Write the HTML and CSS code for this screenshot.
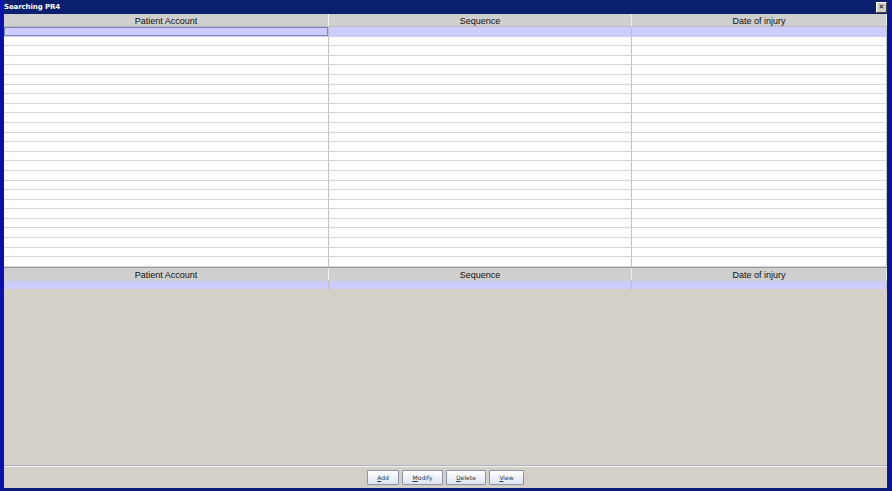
FILE: index.html
```html
<!DOCTYPE html>
<html lang="en">
<head>
  <meta charset="UTF-8">
  <title>Searching PR4</title>
  <link rel="stylesheet" href="styles.css">
</head>
<body>
  <div class="window">
    <div class="titlebar">
      <span class="title">Searching PR4</span>
      <span class="close">&#10005;</span>
    </div>
    <div class="content">
      <div class="table top-table">
        <div class="head-row">
          <div class="head-cell">Patient Account</div>
          <div class="head-cell">Sequence</div>
          <div class="head-cell">Date of injury</div>
        </div>
        <div class="row selected">
          <div class="cell focus"></div>
          <div class="cell"></div>
          <div class="cell"></div>
        </div>
        <div id="rows"></div>
      </div>

      <div class="table bottom-table">
        <div class="head-row">
          <div class="head-cell">Patient Account</div>
          <div class="head-cell">Sequence</div>
          <div class="head-cell">Date of injury</div>
        </div>
        <div class="row selected">
          <div class="cell"></div>
          <div class="cell"></div>
          <div class="cell"></div>
        </div>
      </div>

      <div class="empty"></div>

      <div class="button-bar">
        <button type="button" class="btn btn-add"><u>A</u>dd</button>
        <button type="button" class="btn btn-modify"><u>M</u>odify</button>
        <button type="button" class="btn btn-delete"><u>D</u>elete</button>
        <button type="button" class="btn btn-view"><u>V</u>iew</button>
      </div>
    </div>
  </div>

  <script>
    // empty result rows under the selected one
    const rows = document.getElementById('rows');
    for (let i = 0; i < 24; i++) {
      const row = document.createElement('div');
      row.className = 'row';
      row.innerHTML = '<div class="cell"></div><div class="cell"></div><div class="cell"></div>';
      rows.appendChild(row);
    }
  </script>
</body>
</html>
```

FILE: styles.css
```css
body {
  margin: 0;
  background-color: #0a1a78;
  font-family: Tahoma, "DejaVu Sans", "Liberation Sans", sans-serif;
}
.window {
  width: 892px;
  height: 491px;
  box-sizing: border-box;
  display: flex;
  flex-direction: column;
  background-color: #0b1e7c;
  border-left: 3px solid #0a10b0;
  border-right: 3px solid #0a10b0;
  border-bottom: 3px solid #0a1a78;
}
.titlebar {
  height: 14px;
  flex-shrink: 0;
  display: flex;
  align-items: center;
  justify-content: space-between;
  padding: 0 2px 0 1px;
  background-color: #0a1f6e;
}
.title {
  color: white;
  font-size: 7px;
  font-weight: bold;
  font-family: "DejaVu Sans", sans-serif;
  letter-spacing: -0.1px;
}
.close {
  width: 9px;
  height: 9px;
  background-color: #d4d0c8;
  border: 1px solid #ffffff;
  border-right-color: #404040;
  border-bottom-color: #404040;
  color: #000;
  font-size: 7px;
  line-height: 9px;
  text-align: center;
  font-weight: bold;
}
.content {
  flex: 1;
  display: flex;
  flex-direction: column;
  background-color: #d4d0c8;
  margin-left: 1px;
  margin-right: 2px;
}
.head-row,
.row {
  display: grid;
  grid-template-columns: 325px 303px 1fr;
}
.head-cell {
  height: 12px;
  background-color: #cfcfcf;
  border-right: 1px solid #ececec;
  border-bottom: 1px solid #b8b8b8;
  font-size: 9px;
  line-height: 14px;
  text-align: center;
  color: #111;
  font-family: "Liberation Sans", sans-serif;
}
.top-table .head-cell {
  height: 12px;
}
.head-cell:first-child {
  border-right-color: #f4f4f4;
}
.top-table {
  background-color: white;
}
.row .cell {
  height: 8.6px;
  border-right: 1px solid #c0c0c0;
  border-bottom: 1px solid #d6d6d6;
  background-color: white;
}
.row.selected .cell {
  background-color: #ccccff;
  border-bottom-color: #ccccff;
}
.row.selected .cell.focus {
  box-shadow: inset 0 0 0 1px #7a86b8;
}
.bottom-table {
  border-top: 1px solid #9a9aa8;
}
.bottom-table .head-cell {
  border-bottom-color: #cfcfcf;
}
.bottom-table .row .cell {
  border-bottom: 1px solid #d4d0c8;
}
.empty {
  flex: 1;
  border-bottom: 1px solid #a9b0c0;
}
.button-bar {
  height: 21px;
  display: flex;
  justify-content: center;
  align-items: center;
  gap: 3px;
  border-top: 1px solid #f2f2f2;
}
.btn {
  box-sizing: border-box;
  height: 15px;
  padding: 0;
  font-size: 6px;
  font-family: "DejaVu Sans", sans-serif;
  color: #333;
  background: linear-gradient(#ffffff, #dce4f0);
  border: 1px solid #8a94a8;
  border-radius: 1px;
}
.btn-add {
  width: 32px;
}
.btn-modify {
  width: 41px;
}
.btn-delete {
  width: 40px;
}
.btn-view {
  width: 35px;
}
```
